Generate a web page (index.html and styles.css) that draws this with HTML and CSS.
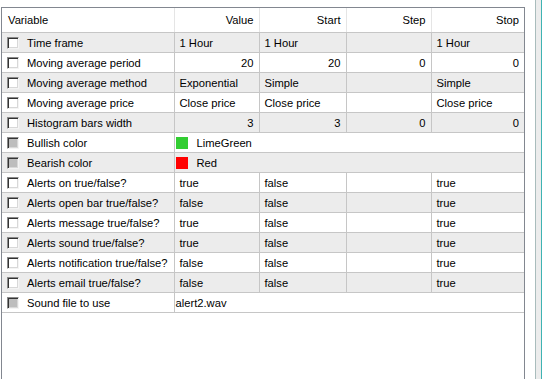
FILE: index.html
```html
<!DOCTYPE html>
<html>
<head>
<meta charset="utf-8">
<link rel="stylesheet" href="styles.css">
</head>
<body>
<div class="page">
  <div class="listbox">
    <table class="grid">
      <colgroup>
        <col class="c-var"><col class="c-val"><col class="c-start"><col class="c-step"><col class="c-stop">
      </colgroup>
      <thead>
        <tr>
          <th class="left">Variable</th>
          <th>Value</th>
          <th>Start</th>
          <th>Step</th>
          <th>Stop</th>
        </tr>
      </thead>
      <tbody>
        <tr class="odd">
          <td><span class="cb"></span>Time frame</td>
          <td>1 Hour</td><td>1 Hour</td><td></td><td>1 Hour</td>
        </tr>
        <tr>
          <td><span class="cb"></span>Moving average period</td>
          <td class="num">20</td><td class="num">20</td><td class="num">0</td><td class="num">0</td>
        </tr>
        <tr class="odd">
          <td><span class="cb"></span>Moving average method</td>
          <td>Exponential</td><td>Simple</td><td></td><td>Simple</td>
        </tr>
        <tr>
          <td><span class="cb"></span>Moving average price</td>
          <td>Close price</td><td>Close price</td><td></td><td>Close price</td>
        </tr>
        <tr class="odd">
          <td><span class="cb"></span>Histogram bars width</td>
          <td class="num">3</td><td class="num">3</td><td class="num">0</td><td class="num">0</td>
        </tr>
        <tr>
          <td><span class="cb off"></span>Bullish color</td>
          <td colspan="4" class="span"><span class="swatch lime"></span>LimeGreen</td>
        </tr>
        <tr class="odd">
          <td><span class="cb off"></span>Bearish color</td>
          <td colspan="4" class="span"><span class="swatch red"></span>Red</td>
        </tr>
        <tr>
          <td><span class="cb"></span>Alerts on true/false?</td>
          <td>true</td><td>false</td><td></td><td>true</td>
        </tr>
        <tr class="odd">
          <td><span class="cb"></span>Alerts open bar true/false?</td>
          <td>false</td><td>false</td><td></td><td>true</td>
        </tr>
        <tr>
          <td><span class="cb"></span>Alerts message true/false?</td>
          <td>true</td><td>false</td><td></td><td>true</td>
        </tr>
        <tr class="odd">
          <td><span class="cb"></span>Alerts sound true/false?</td>
          <td>true</td><td>false</td><td></td><td>true</td>
        </tr>
        <tr>
          <td><span class="cb"></span>Alerts notification true/false?</td>
          <td>false</td><td>false</td><td></td><td>true</td>
        </tr>
        <tr class="odd">
          <td><span class="cb"></span>Alerts email true/false?</td>
          <td>false</td><td>false</td><td></td><td>true</td>
        </tr>
        <tr>
          <td><span class="cb off"></span>Sound file to use</td>
          <td colspan="4" class="span">alert2.wav</td>
        </tr>
      </tbody>
    </table>
  </div>
  <div class="edge"></div>
</div>
</body>
</html>
```

FILE: styles.css
```css
html, body {
  margin: 0;
  padding: 0;
  background: #ffffff;
  overflow: hidden;
}

.page {
  display: flex;
  align-items: flex-start;
  height: 379px;
  font-family: "Liberation Sans", Arial, sans-serif;
  font-size: 11.2px;
  color: #000;
}

.listbox {
  margin-left: 1px;
  margin-top: 7px;
  width: 522px;
  height: 380px;
  border: 1px solid #828790;
  border-bottom: none;
  background: #fff;
}

.grid {
  width: 522px;
  table-layout: fixed;
  border-collapse: collapse;
  border-spacing: 0;
}

.c-var { width: 172px; }
.c-val { width: 85px; }
.c-start { width: 87px; }
.c-step { width: 85px; }
.c-stop { width: 93px; }

.grid th {
  height: 24px;
  padding: 0 5px 0 6px;
  font-weight: normal;
  text-align: right;
  border-right: 1px solid #e5e5e5;
  border-bottom: 1px solid #c6c6c6;
  white-space: nowrap;
}

.grid th.left {
  text-align: left;
}

.grid th:last-child {
  border-right: none;
}

.grid td {
  height: 19px;
  padding: 0 5px 0 5px;
  border-right: 1px solid #c6c6c6;
  border-bottom: 1px solid #c6c6c6;
  white-space: nowrap;
  overflow: hidden;
  vertical-align: middle;
}

.grid td:last-child {
  border-right: none;
}

.grid td:first-child {
  padding-left: 5px;
}

.grid td.num {
  text-align: right;
}

.grid td.span {
  padding-left: 1px;
}

.grid tr.odd td {
  background: #ececec;
}

.cb {
  display: inline-block;
  box-sizing: border-box;
  width: 12px;
  height: 12px;
  margin-right: 8px;
  vertical-align: -2px;
  background: #ffffff;
  border-top: 1px solid #8a8a8a;
  border-left: 1px solid #8a8a8a;
  border-right: 1px solid #f4f4f4;
  border-bottom: 1px solid #f4f4f4;
  box-shadow: inset 1px 1px 0 #333333, inset -1px -1px 0 #d8d8d8;
}

.cb.off {
  background: #bdbdbd;
}

.swatch {
  display: inline-block;
  width: 12px;
  height: 12px;
  margin-right: 9px;
  vertical-align: -2px;
}

.swatch.lime {
  background: #32cd32;
}

.swatch.red {
  background: #ff0000;
}

.edge {
  margin-left: 10px;
  width: 5px;
  height: 379px;
  border-left: 1px solid #a9bcbc;
  border-right: 1px solid #3fb3b3;
  background: #ececec;
}
```
